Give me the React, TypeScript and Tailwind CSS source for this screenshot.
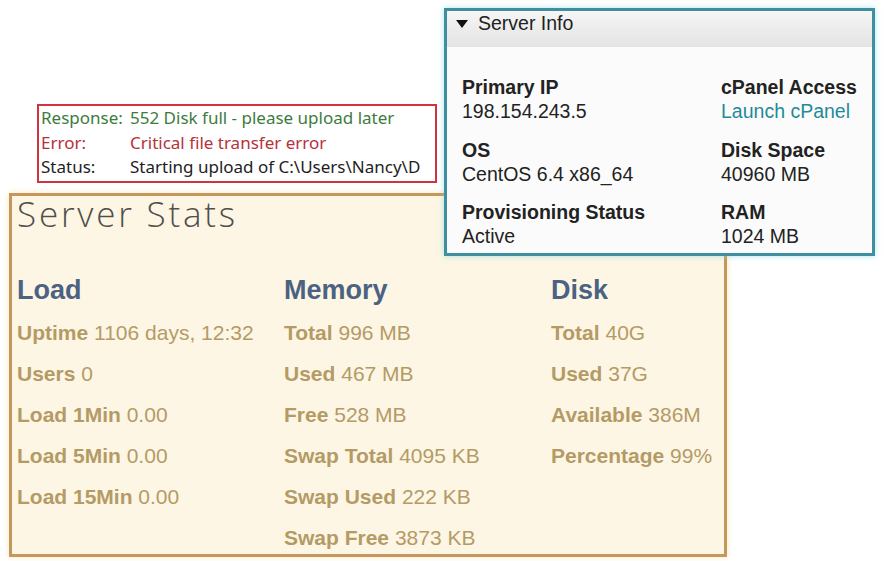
import React from "react";

const arial = { fontFamily: '"Liberation Sans", Arial, sans-serif' };

function Item({ k, v }: { k: string; v: string }) {
  return (
    <div className="leading-[41px] h-[41px] whitespace-nowrap">
      <span className="font-bold">{k}</span> {v}
    </div>
  );
}

function Col({ title, items, last }: { title: string; items: [string, string][]; last?: boolean }) {
  return (
    <div className={last ? "flex-1 min-w-0" : "w-[267px] shrink-0"}>
      <div className="text-[27px] font-bold leading-[32px] text-[#4b6282]">{title}</div>
      <div className="mt-[6px] text-[21px] text-[#b49b66]">
        {items.map(([k, v]) => (
          <Item key={k} k={k} v={v} />
        ))}
      </div>
    </div>
  );
}

function InfoField({ label, value, link }: { label: string; value: string; link?: boolean }) {
  return (
    <div className="h-[62.5px]">
      <div className="font-bold leading-[24px]">{label}</div>
      <div className={"leading-[24px] " + (link ? "text-[#1f8a9c]" : "")}>{value}</div>
    </div>
  );
}

export default function App() {
  return (
    <div className="relative w-[884px] h-[561px] bg-white overflow-hidden" style={arial}>
      {/* FTP log */}
      <div
        className="ml-[37px] mt-[104px] w-[400px] h-[79px] border-2 border-[#d0343f] bg-white pl-[2px] pt-0 text-[17px] leading-[24.5px] overflow-hidden"
        style={{ fontFamily: '"Noto Sans", "Open Sans", sans-serif' }}
      >
        <div className="flex text-[#3d7b3d] whitespace-nowrap">
          <span className="w-[89px] shrink-0">Response:</span>
          <span>552 Disk full - please upload later</span>
        </div>
        <div className="flex text-[#b5313b] whitespace-nowrap">
          <span className="w-[89px] shrink-0">Error:</span>
          <span>Critical file transfer error</span>
        </div>
        <div className="flex text-[#1e1e1e] whitespace-nowrap">
          <span className="w-[89px] shrink-0">Status:</span>
          <span>Starting upload of C:\Users\Nancy\D</span>
        </div>
      </div>

      {/* Server Stats */}
      <div className="ml-[9px] mt-[10px] w-[718px] h-[364px] border-[3px] border-[#c4975c] bg-[#fdf6e4] shadow-[0_0_6px_rgba(250,215,140,0.6)] pl-[5px]">
        <div
          className="text-[35px] font-light leading-[40px] text-[#4f4f4c] tracking-[2.8px] -mt-[2px]"
          style={{ fontFamily: '"Open Sans", Lato, sans-serif' }}
        >
          Server Stats
        </div>
        <div className="mt-[40px] flex">
          <Col
            title="Load"
            items={[
              ["Uptime", "1106 days, 12:32"],
              ["Users", "0"],
              ["Load 1Min", "0.00"],
              ["Load 5Min", "0.00"],
              ["Load 15Min", "0.00"],
            ]}
          />
          <Col
            title="Memory"
            items={[
              ["Total", "996 MB"],
              ["Used", "467 MB"],
              ["Free", "528 MB"],
              ["Swap Total", "4095 KB"],
              ["Swap Used", "222 KB"],
              ["Swap Free", "3873 KB"],
            ]}
          />
          <Col
            last
            title="Disk"
            items={[
              ["Total", "40G"],
              ["Used", "37G"],
              ["Available", "386M"],
              ["Percentage", "99%"],
            ]}
          />
        </div>
      </div>

      {/* Server Info overlay panel */}
      <div className="absolute left-[444px] top-[8px] w-[431px] h-[248px] border-[3px] border-[#3f8fa1] bg-[#fbfbfb] shadow-[0_0_6px_rgba(120,210,225,0.6)] text-[19.5px] text-[#222]">
        <div className="h-[36px] bg-gradient-to-b from-[#f6f6f6] to-[#e3e3e3] flex items-start pl-[9px] leading-[24px]">
          <svg width="12" height="8" viewBox="0 0 12 8" className="mt-[9px] mr-[10px]">
            <path d="M0 0 L12 0 L6 8 Z" fill="#111" />
          </svg>
          <span>Server Info</span>
        </div>
        <div className="flex pl-[15px] pt-[28px]">
          <div className="w-[259px]">
            <InfoField label="Primary IP" value="198.154.243.5" />
            <InfoField label="OS" value="CentOS 6.4 x86_64" />
            <InfoField label="Provisioning Status" value="Active" />
          </div>
          <div>
            <InfoField label="cPanel Access" value="Launch cPanel" link />
            <InfoField label="Disk Space" value="40960 MB" />
            <InfoField label="RAM" value="1024 MB" />
          </div>
        </div>
      </div>
    </div>
  );
}
